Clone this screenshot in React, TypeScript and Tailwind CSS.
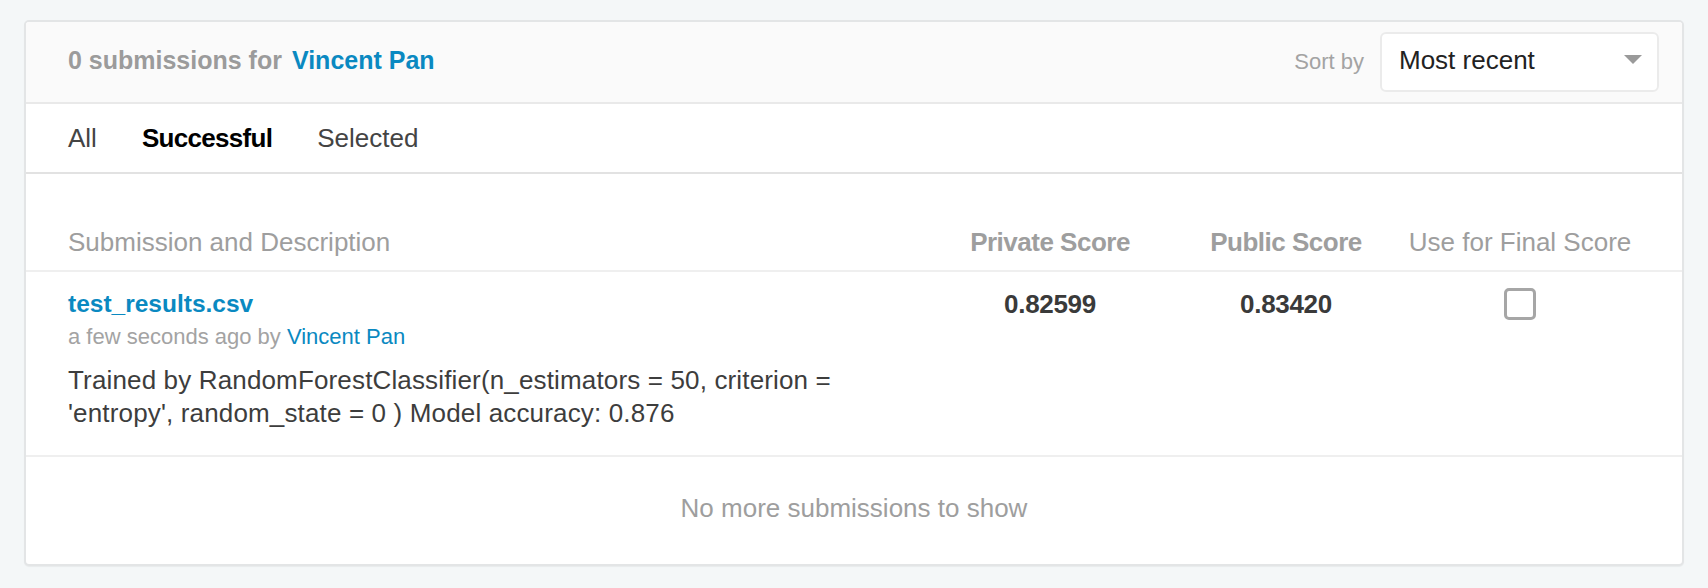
import { useState } from "react";

const columns = "grid grid-cols-[1fr_244px_228px_240px]";

export default function App() {
  const [selected, setSelected] = useState(false);

  return (
    <div className="min-h-screen bg-[#f4f7f8] px-6 pt-5 font-['Liberation_Sans',Arial,sans-serif]">
      <div className="rounded-[5px] border-2 border-[#e3e5e6] bg-white shadow-[0_1px_1px_rgba(0,0,0,0.05)] overflow-hidden">
        {/* Header */}
        <div className="flex h-[82px] items-center justify-between border-b-2 border-[#e9e9e9] bg-[#fafafa] pl-[42px] pr-[23px]">
          <div className="flex pb-[2px] text-[25px] font-bold">
            <span className="text-[#9b9b9b]">0 submissions for</span>
            <a className="ml-[10px] text-[#0a89c1]">Vincent Pan</a>
          </div>
          <div className="flex items-center">
            <span className="pb-[2px] text-[22px] text-[#a3a3a3]">Sort by</span>
            <button className="ml-[16px] flex h-[60px] w-[279px] items-center justify-between rounded-[6px] border-2 border-[#ebebeb] bg-white pl-[17px] pr-[15px]">
              <span className="pb-[3px] text-[26px] text-[#222]">Most recent</span>
              <svg width="18" height="9" viewBox="0 0 18 9" className="-mt-[6px]">
                <polygon points="0,0 18,0 9,9" fill="#9a9a9a" />
              </svg>
            </button>
          </div>
        </div>

        {/* Tabs */}
        <div className="flex h-[70px] items-center gap-[45px] border-b-2 border-[#e2e2e2] px-[42px] text-[26px]">
          <span className="text-[#444]">All</span>
          <span className="font-bold tracking-[-0.7px] text-black">Successful</span>
          <span className="text-[#444]">Selected</span>
        </div>

        {/* Table header */}
        <div className={`${columns} border-b-2 border-[#efefef] px-[42px] pt-[53px] pb-[13px] text-[26px] leading-[30px] text-[#9e9e9e]`}>
          <span>Submission and Description</span>
          <span className="text-center font-bold tracking-[-0.5px]">Private Score</span>
          <span className="text-center font-bold tracking-[-0.5px]">Public Score</span>
          <span className="text-center">Use for Final Score</span>
        </div>

        {/* Row */}
        <div className={`${columns} border-b-2 border-[#efefef] px-[42px] pt-[17px] pb-[25px]`}>
          <div>
            <a className="block text-[24.5px] font-bold leading-[30px] text-[#0a89c1]">test_results.csv</a>
            <div className="mt-[2px] text-[22px] leading-[32px] text-[#a3a3a3]">
              a few seconds ago by <a className="text-[#0a89c1]">Vincent Pan</a>
            </div>
            <p className="mt-[11px] max-w-[790px] text-[26px] leading-[33px] tracking-[0.15px] text-[#3d3d3d]">
              Trained by RandomForestClassifier(n_estimators = 50, criterion = 'entropy', random_state = 0 ) Model accuracy: 0.876
            </p>
          </div>
          <div className="text-center text-[26px] font-bold leading-[30px] tracking-[-0.3px] text-[#3a3a3a]">0.82599</div>
          <div className="text-center text-[26px] font-bold leading-[30px] tracking-[-0.3px] text-[#3a3a3a]">0.83420</div>
          <div className="flex justify-center">
            <button
              onClick={() => setSelected(!selected)}
              className="-mt-[1px] h-[32px] w-[32px] rounded-[5px] border-[3px] border-[#a6a6a6] bg-white"
              aria-checked={selected}
            />
          </div>
        </div>

        {/* Footer */}
        <div className="pt-[36px] pb-[41px] text-center text-[26px] leading-[30px] text-[#9e9e9e]">
          No more submissions to show
        </div>
      </div>
    </div>
  );
}
